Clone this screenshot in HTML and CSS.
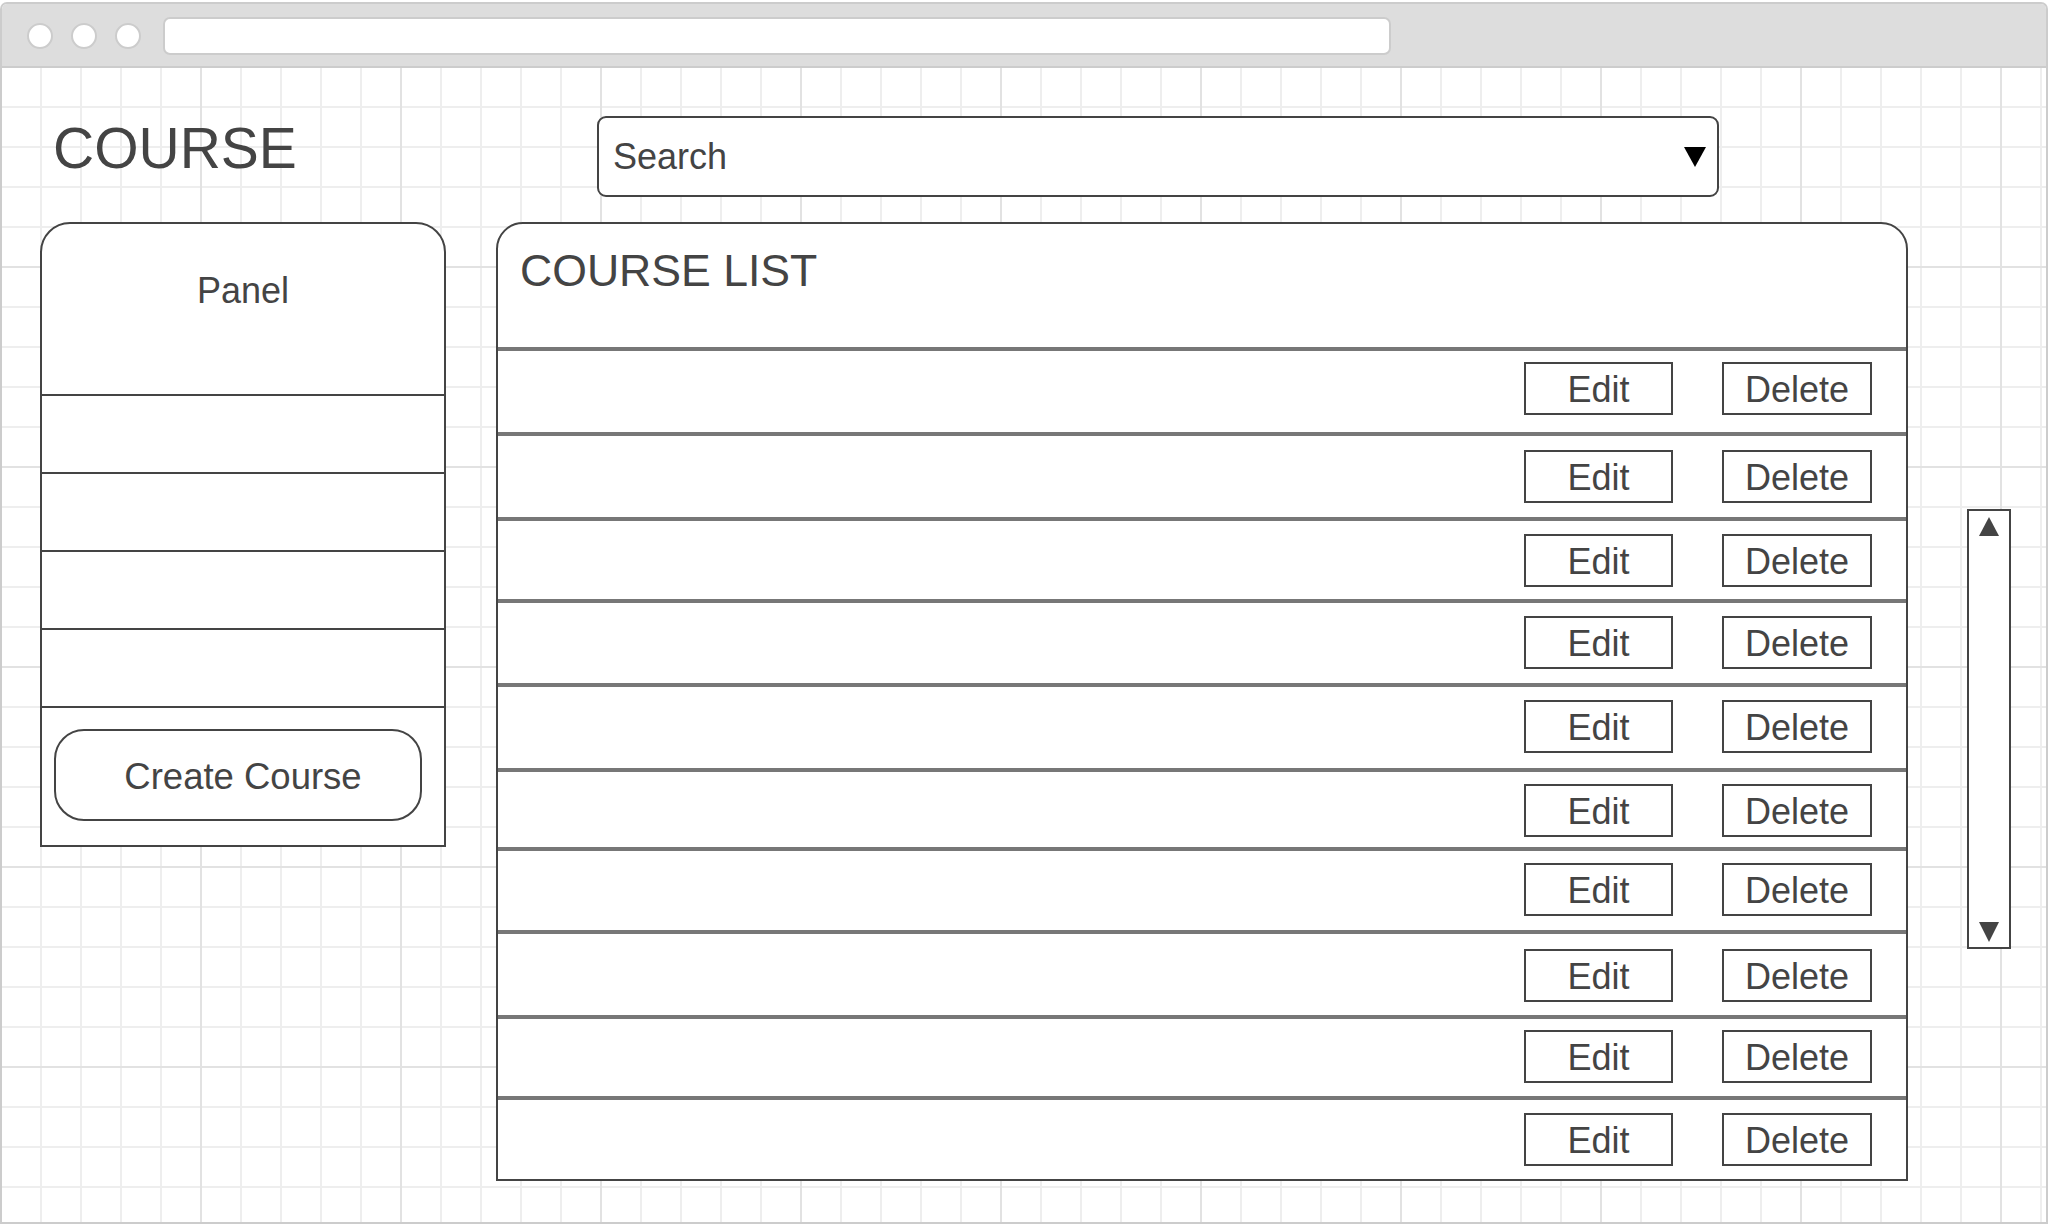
FILE: index.html
```html
<!DOCTYPE html>
<html lang="en">
<head>
<meta charset="utf-8">
<title>Course</title>
<link rel="stylesheet" href="styles.css">
</head>
<body>
<div class="window">
  <div class="toolbar">
    <span class="dot"></span>
    <span class="dot"></span>
    <span class="dot"></span>
    <div class="url"></div>
  </div>
  <div class="content">
    <div class="top">
      <h1 class="title">COURSE</h1>
      <div class="search">
        <span class="search-text">Search</span>
        <span class="caret"></span>
      </div>
    </div>
    <div class="main">
      <div class="panel">
        <div class="panel-head">Panel</div>
        <div class="panel-row"></div>
        <div class="panel-row"></div>
        <div class="panel-row"></div>
        <div class="panel-row"></div>
        <div class="panel-foot">
          <div class="create-btn">Create Course</div>
        </div>
      </div>
      <div class="list">
        <div class="list-head">COURSE LIST</div>
        <div class="rows">
          <div class="row"><div class="btn">Edit</div><div class="btn">Delete</div></div>
          <div class="row"><div class="btn">Edit</div><div class="btn">Delete</div></div>
          <div class="row"><div class="btn">Edit</div><div class="btn">Delete</div></div>
          <div class="row"><div class="btn">Edit</div><div class="btn">Delete</div></div>
          <div class="row"><div class="btn">Edit</div><div class="btn">Delete</div></div>
          <div class="row"><div class="btn">Edit</div><div class="btn">Delete</div></div>
          <div class="row"><div class="btn">Edit</div><div class="btn">Delete</div></div>
          <div class="row"><div class="btn">Edit</div><div class="btn">Delete</div></div>
          <div class="row"><div class="btn">Edit</div><div class="btn">Delete</div></div>
          <div class="row"><div class="btn">Edit</div><div class="btn">Delete</div></div>
        </div>
      </div>
      <div class="scroll">
        <span class="arrow-up"></span>
        <span class="arrow-down"></span>
      </div>
    </div>
  </div>
</div>
</body>
</html>
```

FILE: styles.css
```css
* { box-sizing: border-box; }

html, body {
  margin: 0;
  padding: 0;
  background: #ffffff;
}

body {
  font-family: "Liberation Sans", Arial, sans-serif;
  color: #444444;
}

.window {
  margin-top: 2px;
  width: 2048px;
  height: 1222px;
  border: 2px solid #cccccc;
  border-bottom: 0;
  border-radius: 7px 7px 0 0;
  overflow: hidden;
  display: flex;
  flex-direction: column;
}

.toolbar {
  flex: 0 0 64px;
  background: #dddddd;
  border-bottom: 2px solid #cccccc;
  display: flex;
  align-items: center;
  padding: 2px 0 0 25px;
}

.dot {
  width: 26px;
  height: 26px;
  border-radius: 50%;
  background: #ffffff;
  border: 2px solid #cccccc;
  margin-right: 18px;
}

.dot:nth-child(3) { margin-right: 22px; }

.url {
  width: 1228px;
  height: 38px;
  background: #ffffff;
  border: 2px solid #cccccc;
  border-radius: 7px;
}

.content {
  flex: 1 1 auto;
  padding: 48px 0 0 38px;
  background-color: #ffffff;
  background-image:
    linear-gradient(to right, #e2e2e2 2px, transparent 2px),
    linear-gradient(to bottom, #e2e2e2 2px, transparent 2px),
    linear-gradient(to right, #eeeeee 2px, transparent 2px),
    linear-gradient(to bottom, #eeeeee 2px, transparent 2px);
  background-size: 200px 200px, 200px 200px, 40px 40px, 40px 40px;
  background-position: 198px 0, 0 198px, 38px 0, 0 38px;
  border-bottom: 2px solid #cccccc;
}

.top {
  display: flex;
  align-items: flex-start;
}

.title {
  margin: 0;
  width: 557px;
  padding-left: 13px;
  font-size: 57px;
  line-height: 64px;
  font-weight: normal;
  color: #444444;
}

.search {
  width: 1122px;
  height: 81px;
  border: 2px solid #444444;
  border-radius: 9px;
  background: #ffffff;
  display: flex;
  align-items: center;
  justify-content: space-between;
  padding: 0 11px 0 14px;
}

.search-text {
  font-size: 36px;
  line-height: 40px;
}

.caret {
  width: 0;
  height: 0;
  border-left: 11.5px solid transparent;
  border-right: 11.5px solid transparent;
  border-top: 20px solid #000000;
  margin-top: 1px;
}

.main {
  display: flex;
  align-items: flex-start;
  margin-top: 25px;
}

.panel {
  flex: 0 0 406px;
  border: 2px solid #444444;
  border-radius: 30px 30px 0 0;
  background: #ffffff;
}

.panel-head {
  height: 170px;
  padding-top: 47px;
  text-align: center;
  font-size: 36px;
  line-height: 40px;
}

.panel-row {
  height: 78px;
  border-top: 2px solid #444444;
}

.panel-foot {
  height: 139px;
  border-top: 2px solid #444444;
  padding: 21px 0 0 12px;
}

.create-btn {
  width: 368px;
  height: 92px;
  border: 2px solid #444444;
  border-radius: 30px;
  display: flex;
  align-items: center;
  justify-content: center;
  padding: 3px 0 0 10px;
  font-size: 36.5px;
  line-height: 40px;
}

.list {
  flex: 0 0 1412px;
  margin-left: 50px;
  border: 2px solid #444444;
  border-radius: 27px 27px 0 0;
  background: #ffffff;
}

.list-head {
  height: 123px;
  padding: 22px 0 0 22px;
  font-size: 44.6px;
  line-height: 50px;
}

.row {
  border-top: 4px solid #777777;
  display: flex;
  align-items: flex-start;
  justify-content: flex-end;
  gap: 49px;
  padding-right: 34px;
}

.row:nth-child(1)  { height: 85px; padding-top: 11px; }
.row:nth-child(2)  { height: 85px; padding-top: 14px; }
.row:nth-child(3)  { height: 82px; padding-top: 13px; }
.row:nth-child(4)  { height: 84px; padding-top: 13px; }
.row:nth-child(5)  { height: 85px; padding-top: 13px; }
.row:nth-child(6)  { height: 79px; padding-top: 12px; }
.row:nth-child(7)  { height: 83px; padding-top: 12px; }
.row:nth-child(8)  { height: 85px; padding-top: 15px; }
.row:nth-child(9)  { height: 81px; padding-top: 11px; }
.row:nth-child(10) { height: 83px; padding-top: 13px; }

.btn {
  width: 149px;
  height: 53px;
  border: 2px solid #444444;
  display: flex;
  align-items: center;
  justify-content: center;
  font-size: 36px;
  line-height: 40px;
  padding-top: 3px;
}

.btn + .btn { width: 150px; }

.scroll {
  flex: 0 0 44px;
  height: 440px;
  margin-left: 59px;
  margin-top: 287px;
  border: 2px solid #444444;
  background: #ffffff;
  display: flex;
  flex-direction: column;
  align-items: center;
  justify-content: space-between;
  padding: 6px 0 5px;
}

.arrow-up {
  width: 0;
  height: 0;
  border-left: 10px solid transparent;
  border-right: 10px solid transparent;
  border-bottom: 19px solid #444444;
}

.arrow-down {
  width: 0;
  height: 0;
  border-left: 10px solid transparent;
  border-right: 10px solid transparent;
  border-top: 20px solid #444444;
}
```
